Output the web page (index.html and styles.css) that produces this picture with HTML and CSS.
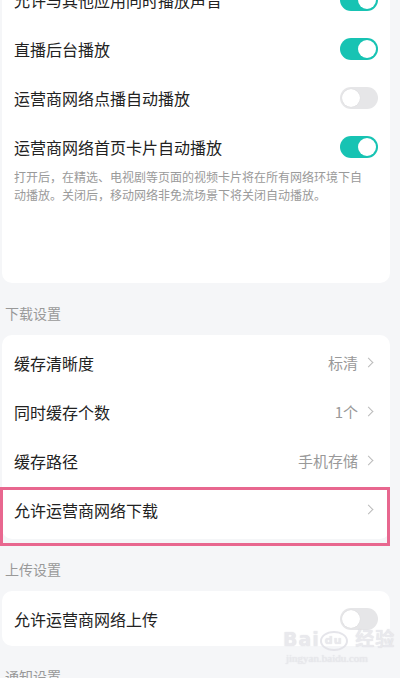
FILE: index.html
```html
<!DOCTYPE html>
<html lang="zh-CN">
<head>
<meta charset="utf-8">
<title>设置</title>
<link rel="stylesheet" href="styles.css">
</head>
<body>
<div class="page">
  <div class="card card-top">
    <div class="row row-first"><span class="label">允许与其他应用同时播放声音</span><span class="switch on"></span></div>
    <div class="row"><span class="label">直播后台播放</span><span class="switch on"></span></div>
    <div class="row"><span class="label">运营商网络点播自动播放</span><span class="switch"></span></div>
    <div class="row"><span class="label">运营商网络首页卡片自动播放</span><span class="switch on"></span></div>
    <p class="desc">打开后，在精选、电视剧等页面的视频卡片将在所有网络环境下自动播放。关闭后，移动网络非免流场景下将关闭自动播放。</p>
  </div>

  <div class="section-title">下载设置</div>
  <div class="card card-list">
    <div class="row"><span class="label">缓存清晰度</span><span class="value">标清<span class="chev"></span></span></div>
    <div class="row"><span class="label">同时缓存个数</span><span class="value">1个<span class="chev"></span></span></div>
    <div class="row"><span class="label">缓存路径</span><span class="value">手机存储<span class="chev"></span></span></div>
    <div class="row highlighted"><span class="label">允许运营商网络下载</span><span class="value"><span class="chev"></span></span></div>
  </div>

  <div class="section-title">上传设置</div>
  <div class="card card-single">
    <div class="row"><span class="label">允许运营商网络上传</span><span class="switch"></span></div>
  </div>

  <div class="section-title">通知设置</div>
</div>
<div class="watermark">
  <div class="wm-main">Bai<span class="wm-paw">du</span> 经验</div>
  <div class="wm-sub">jingyan.baidu.com</div>
</div>
</body>
</html>
```

FILE: styles.css
```css
* { box-sizing: border-box; }
html, body {
  margin: 0;
  padding: 0;
  background: #f5f6f8;
  font-family: "Noto Sans CJK SC", "Noto Sans", sans-serif;
  color: #222;
  overflow: hidden;
}
body { width: 400px; height: 678px; position: relative; }
.page {
  width: 400px;
  padding-left: 2px;
  padding-right: 10px;
}
.card {
  background: #fff;
  border-radius: 10px;
  width: 388px;
}
.card-top {
  margin-top: -28px;
  padding-bottom: 79px;
  border-radius: 0 0 10px 10px;
}
.row {
  height: 49px;
  display: flex;
  align-items: center;
  justify-content: space-between;
  padding: 0 12px 0 12px;
  position: relative;
}
.row-first { height: 52px; padding-top: 3px; }
.label {
  font-size: 16px;
  line-height: 20px;
  color: #222;
}
.desc {
  margin: -3px 0 0;
  padding: 0 20px 0 12px;
  font-size: 12px;
  line-height: 18px;
  color: #9a9a9a;
}
.switch {
  width: 38px;
  height: 22px;
  border-radius: 11px;
  background: #e6e6e8;
  position: relative;
  flex: none;
}
.switch::after {
  content: "";
  position: absolute;
  top: 2px;
  left: 2px;
  width: 18px;
  height: 18px;
  border-radius: 50%;
  background: #fff;
  box-shadow: 0 0 1px rgba(0,0,0,0.12);
}
.switch.on { background: #17c3b3; }
.switch.on::after { left: 18px; box-shadow: none; }

.section-title {
  padding: 20px 0 12px 3px;
  font-size: 14px;
  line-height: 20px;
  color: #999;
}
.card-list { padding: 3px 0 5px; }
.card-single { padding: 3px 0; }
.value {
  display: flex;
  align-items: center;
  font-size: 15px;
  line-height: 20px;
  color: #999;
  padding-right: 6px;
}
.chev {
  display: inline-block;
  width: 7px;
  height: 7px;
  border-top: 1.2px solid #bbb;
  border-right: 1.2px solid #bbb;
  transform: rotate(45deg);
  margin-left: 7px;
}
.highlighted::after {
  content: "";
  position: absolute;
  left: -2px;
  right: 0;
  top: 2px;
  height: 53px;
  border: 3px solid #e8678f;
  pointer-events: none;
}
.watermark {
  position: absolute;
  left: 283px;
  top: 626px;
  color: rgba(236, 236, 240, 0.85);
  text-shadow: 0 0 1px rgba(170,170,180,0.45);
  font-family: "DejaVu Sans", "Noto Sans CJK SC", sans-serif;
}
.wm-main {
  font-size: 19px;
  line-height: 26px;
  font-weight: bold;
  letter-spacing: 1px;
}
.wm-paw {
  display: inline-block;
  font-size: 11px;
  line-height: 16px;
  border: 2px solid rgba(225,225,230,0.85);
  border-radius: 50%;
  padding: 0 3px;
  vertical-align: middle;
}
.wm-sub {
  font-family: "Liberation Serif", serif;
  font-size: 11px;
  line-height: 12px;
  padding-left: 3px;
}
```
